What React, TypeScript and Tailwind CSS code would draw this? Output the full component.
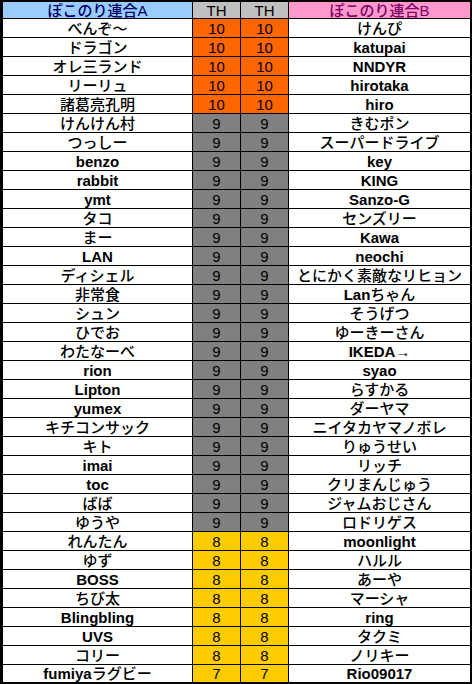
const rows: [string, number, string][] = [
  ['べんぞ～', 10, 'けんぴ'],
  ['ドラゴン', 10, 'katupai'],
  ['オレ三ランド', 10, 'NNDYR'],
  ['リーリュ', 10, 'hirotaka'],
  ['諸葛亮孔明', 10, 'hiro'],
  ['けんけん村', 9, 'きむポン'],
  ['つっしー', 9, 'スーパードライブ'],
  ['benzo', 9, 'key'],
  ['rabbit', 9, 'KING'],
  ['ymt', 9, 'Sanzo-G'],
  ['タコ', 9, 'センズリー'],
  ['まー', 9, 'Kawa'],
  ['LAN', 9, 'neochi'],
  ['ディシェル', 9, 'とにかく素敵なリヒョン'],
  ['非常食', 9, 'Lanちゃん'],
  ['シュン', 9, 'そうげつ'],
  ['ひでお', 9, 'ゆーきーさん'],
  ['わたなーべ', 9, 'IKEDA→'],
  ['rion', 9, 'syao'],
  ['Lipton', 9, 'らすかる'],
  ['yumex', 9, 'ダーヤマ'],
  ['キチコンサック', 9, 'ニイタカヤマノボレ'],
  ['キト', 9, 'りゅうせい'],
  ['imai', 9, 'リッチ'],
  ['toc', 9, 'クリまんじゅう'],
  ['ばば', 9, 'ジャムおじさん'],
  ['ゆうや', 9, 'ロドリゲス'],
  ['れんたん', 8, 'moonlight'],
  ['ゆず', 8, 'ハルル'],
  ['BOSS', 8, 'あーや'],
  ['ちび太', 8, 'マーシャ'],
  ['Blingbling', 8, 'ring'],
  ['UVS', 8, 'タクミ'],
  ['コリー', 8, 'ノリキー'],
  ['fumiyaラグビー', 7, 'Rio09017'],
]

function thColor(th: number) {
  if (th === 10) return 'bg-[#ff6600]'
  if (th === 9) return 'bg-[#808080]'
  return 'bg-[#ffcc00]'
}

// latin runs bold, japanese runs a bit lighter (like the bitmap gothic in the sheet)
function Name({ text }: { text: string }) {
  const parts = text.split(/([\x20-\x7E]+)/).filter(Boolean)
  return (
    <>
      {parts.map((p, i) =>
        /^[\x20-\x7E]+$/.test(p) ? (
          <span key={i} className="font-bold">{p}</span>
        ) : (
          <span key={i} className="font-medium">{p}</span>
        ),
      )}
    </>
  )
}

const grid = 'grid grid-cols-[189px_1px_47px_1px_47px_1px_181px]'
const cell = 'flex items-center justify-center whitespace-nowrap'

export default function App() {
  return (
    <div
      className="w-[472px] h-[684px] box-border border-t-2 border-l-[3px] border-r-2 border-b-2 border-black bg-black flex flex-col gap-px text-black text-[15px] leading-none"
      style={{ fontFamily: '"Liberation Sans", "Noto Sans CJK JP", sans-serif' }}
    >
      {/* header */}
      <div className={`${grid} h-[16px]`}>
        <div className={`${cell} bg-[#99ccff] text-[#000066] font-medium`}>ぽこのり連合A</div>
        <div />
        <div className={`${cell} bg-[#c0c0c0]`}>TH</div>
        <div />
        <div className={`${cell} bg-[#c0c0c0]`}>TH</div>
        <div />
        <div className={`${cell} bg-[#ff99cc] text-[#800066] font-medium`}>ぽこのり連合B</div>
      </div>

      {rows.map(([a, th, b], i) => (
        <div key={i} className={`${grid} ${i === rows.length - 1 ? 'h-[17px]' : 'h-[18px]'}`}>
          <div className={`${cell} bg-white`}><Name text={a} /></div>
          <div />
          <div className={`${cell} ${thColor(th)}`}>{th}</div>
          <div />
          <div className={`${cell} ${thColor(th)}`}>{th}</div>
          <div />
          <div className={`${cell} bg-white`}><Name text={b} /></div>
        </div>
      ))}
    </div>
  )
}
